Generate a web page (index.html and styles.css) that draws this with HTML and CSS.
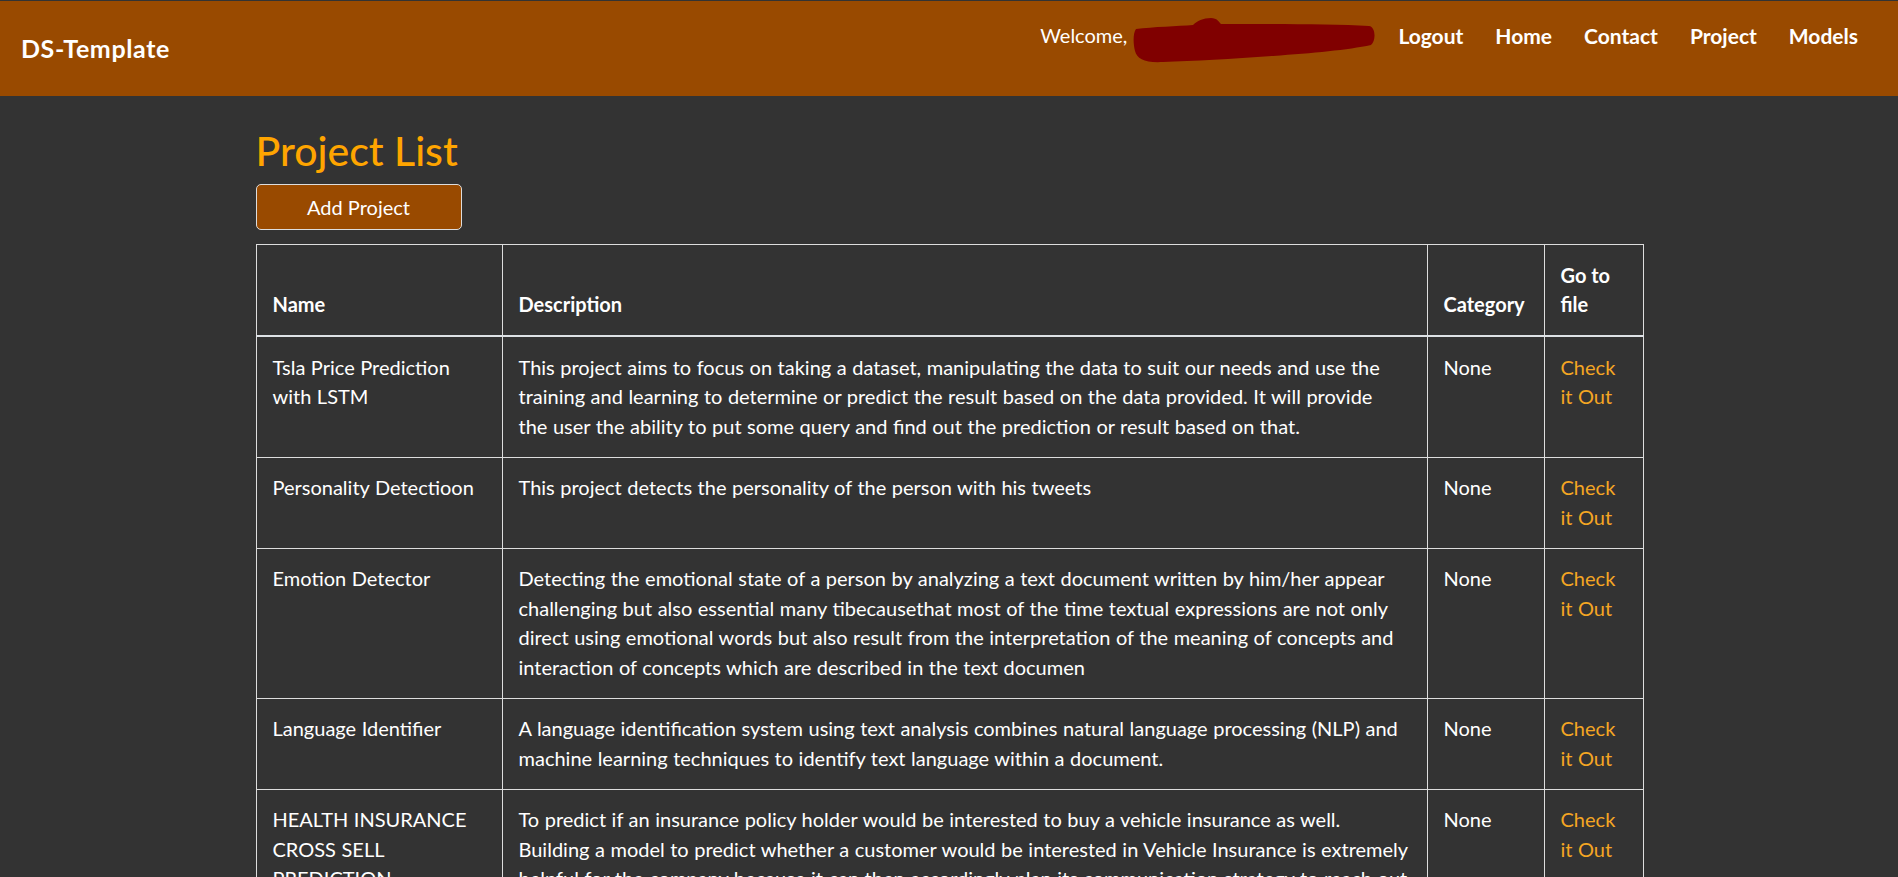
FILE: index.html
```html
<!DOCTYPE html>
<html lang="en">
<head>
<meta charset="utf-8">
<title>Project List</title>
<link rel="stylesheet" href="styles.css">
</head>
<body>
<header class="navbar">
  <a class="brand" href="#">DS-Template</a>
  <nav class="nav-right">
    <span class="welcome">Welcome,<svg class="redact" width="244" height="46" viewBox="0 0 244 46"><path d="M3 12 C20 10 45 9 60 8 C64 4 70 1 78 1 C84 1 86 5 88 7 C140 7 200 7 236 9 C243 10 243 24 238 28 C215 33 180 36 140 39 C100 42 60 44 30 45 C12 46 4 42 2 34 C0 26 0 16 3 12 Z" fill="#800000"/></svg></span>
    <a class="nav-link" href="#">Logout</a>
    <a class="nav-link" href="#">Home</a>
    <a class="nav-link" href="#">Contact</a>
    <a class="nav-link" href="#">Project</a>
    <a class="nav-link" href="#">Models</a>
  </nav>
</header>
<main class="container">
  <h1 class="page-title">Project List</h1>
  <button class="btn-add">Add Project</button>
  <table class="project-table">
    <colgroup>
      <col class="col-name">
      <col class="col-desc">
      <col class="col-cat">
      <col class="col-file">
    </colgroup>
    <thead>
      <tr>
        <th>Name</th>
        <th>Description</th>
        <th class="nowrap">Category</th>
        <th>Go to file</th>
      </tr>
    </thead>
    <tbody>
      <tr>
        <td>Tsla Price Prediction with LSTM</td>
        <td>This project aims to focus on taking a dataset, manipulating the data to suit our needs and use the training and learning to determine or predict the result based on the data provided. It will provide<br>the user the ability to put some query and find out the prediction or result based on that.</td>
        <td>None</td>
        <td><a class="file-link" href="#">Check it Out</a></td>
      </tr>
      <tr>
        <td>Personality Detectioon</td>
        <td>This project detects the personality of the person with his tweets</td>
        <td>None</td>
        <td><a class="file-link" href="#">Check it Out</a></td>
      </tr>
      <tr>
        <td>Emotion Detector</td>
        <td>Detecting the emotional state of a person by analyzing a text document written by him/her appear challenging but also essential many tibecausethat most of the time textual expressions are not only direct using emotional words but also result from the interpretation of the meaning of concepts and interaction of concepts which are described in the text documen</td>
        <td>None</td>
        <td><a class="file-link" href="#">Check it Out</a></td>
      </tr>
      <tr>
        <td>Language Identifier</td>
        <td>A language identification system using text analysis combines natural language processing (NLP) and machine learning techniques to identify text language within a document.</td>
        <td>None</td>
        <td><a class="file-link" href="#">Check it Out</a></td>
      </tr>
      <tr>
        <td>HEALTH INSURANCE CROSS SELL PREDICTION</td>
        <td>To predict if an insurance policy holder would be interested to buy a vehicle insurance as well.<br>Building a model to predict whether a customer would be interested in Vehicle Insurance is extremely<br>helpful for the company because it can then accordingly plan its communication strategy to reach out to those customers and optimise its business model and revenue.</td>
        <td>None</td>
        <td><a class="file-link" href="#">Check it Out</a></td>
      </tr>
    </tbody>
  </table>
</main>
</body>
</html>
```
FILE: styles.css
```css
html, body {
  margin: 0;
  padding: 0;
}
body {
  background: #333333;
  color: #ffffff;
  font-family: "Lato", "Liberation Sans", sans-serif;
  font-size: 20px;
  line-height: 29.5px;
}
.navbar {
  margin-top: 1px;
  height: 95px;
  background: #994a00;
  display: flex;
  justify-content: space-between;
  align-items: center;
  padding: 0 40px 0 21px;
  box-sizing: border-box;
}
.brand {
  color: #fff;
  font-weight: 700;
  font-size: 25px;
  letter-spacing: 0.6px;
  text-decoration: none;
}
.nav-right {
  align-self: flex-start;
  padding-top: 20px;
  display: flex;
  align-items: flex-start;
  gap: 32px;
}
.welcome {
  display: flex;
  align-items: flex-start;
  color: #fff;
}
.redact {
  display: block;
  margin: -4px -11px -13px 6px;
}
.nav-link {
  color: #fff;
  font-weight: 700;
  font-size: 21px;
  text-decoration: none;
}
.container {
  width: 1387px;
  margin: 0 auto;
  padding-top: 30px;
}
.page-title {
  margin: 0 0 9px 0;
  font-size: 41px;
  line-height: 49px;
  font-weight: 500;
  color: #ffa500;
}
.btn-add {
  display: block;
  width: 206px;
  height: 46px;
  background: #994a00;
  border: 1px solid #dddddd;
  border-radius: 5px;
  color: #fff;
  font-family: inherit;
  font-size: 20px;
  padding: 0;
  margin: 0 0 14px 0;
}
.project-table {
  width: 1387px;
  table-layout: fixed;
  border-collapse: collapse;
  border: 1px solid #dddddd;
}
.col-name { width: 246px; }
.col-desc { width: 925px; }
.col-cat { width: 117px; }
.col-file { width: 99px; }
.project-table th,
.project-table td {
  border: 1px solid #dddddd;
  padding: 15.5px 16px;
  text-align: left;
}
.project-table th {
  vertical-align: bottom;
  font-weight: 700;
  border-bottom: 2px solid #dee2e6;
}
.project-table td {
  vertical-align: top;
  word-spacing: 0.4px;
}
.nowrap {
  white-space: nowrap;
}
.file-link {
  color: #f5a623;
  text-decoration: none;
}
```
